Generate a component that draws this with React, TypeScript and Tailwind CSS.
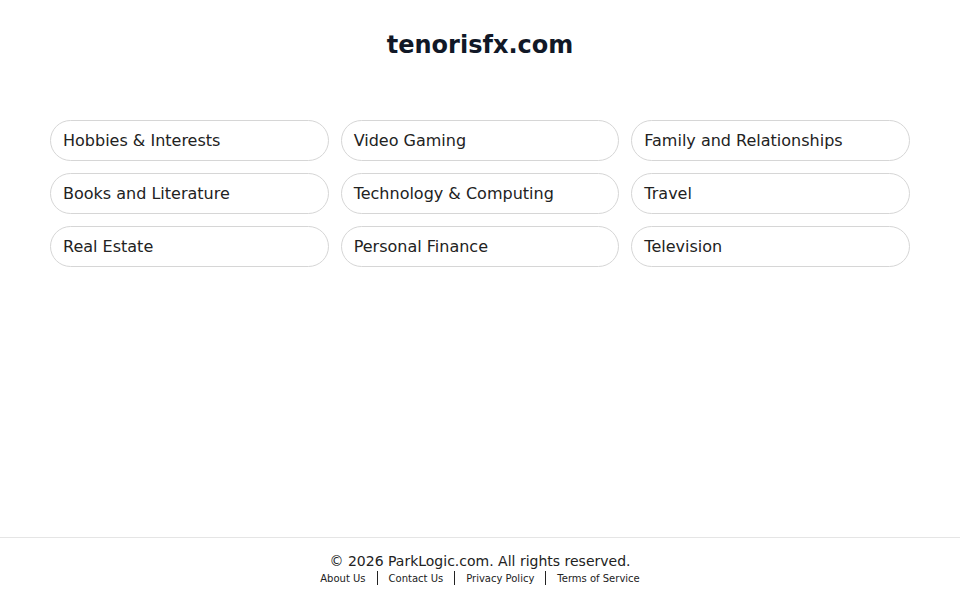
const topics = [
  "Hobbies & Interests",
  "Video Gaming",
  "Family and Relationships",
  "Books and Literature",
  "Technology & Computing",
  "Travel",
  "Real Estate",
  "Personal Finance",
  "Television",
];

const links = ["About Us", "Contact Us", "Privacy Policy", "Terms of Service"];

export default function App() {
  return (
    <div className="min-h-screen flex flex-col bg-white font-['DejaVu_Sans',sans-serif]">
      <main className="flex-1 px-[50px]">
        <h1 className="pt-[29px] text-center text-[24px] leading-[32px] font-bold text-[#111827]">
          tenorisfx.com
        </h1>
        <div className="mt-[59px] grid grid-cols-3 gap-[12px]">
          {topics.map((t) => (
            <a
              key={t}
              href="#"
              className="h-[41px] flex items-center rounded-full border border-[#d6d6d6] px-[12px] text-[16px] text-[#222222]"
            >
              {t}
            </a>
          ))}
        </div>
      </main>
      <footer className="border-t border-[#e5e5e5] pt-[13px] pb-[15px] text-center">
        <p className="text-[14px] leading-[20px] text-[#222222]">
          © 2026 ParkLogic.com. All rights reserved.
        </p>
        <div className="flex justify-center items-center h-[14px] text-[10px] text-[#222222]">
          {links.map((l, i) => (
            <div key={l} className="flex items-center">
              {i > 0 && <span className="mx-[11px] h-[14px] w-px bg-[#222222]" />}
              <a href="#">{l}</a>
            </div>
          ))}
        </div>
      </footer>
    </div>
  );
}
